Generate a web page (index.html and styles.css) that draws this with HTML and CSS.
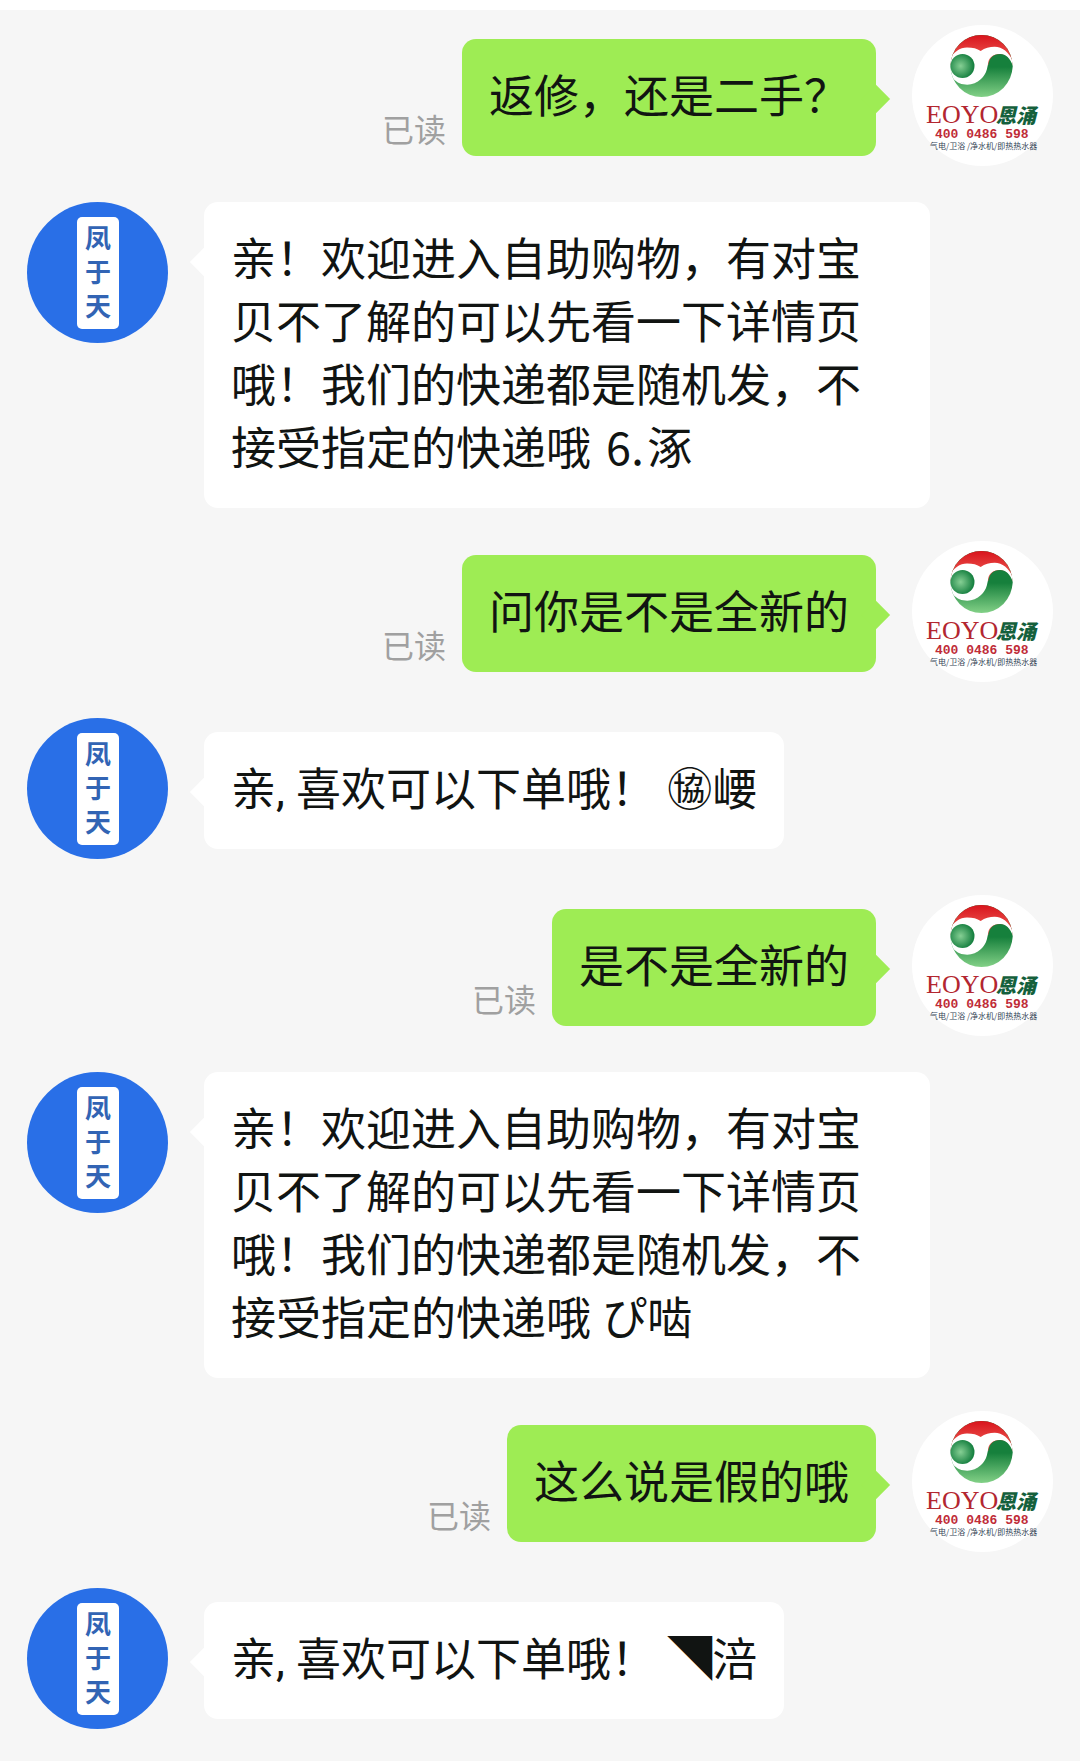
FILE: index.html
```
<!DOCTYPE html>
<html lang="zh-CN">
  <head>
    <meta charset="UTF-8" />
    <meta name="viewport" content="width=device-width, initial-scale=1.0" />
    <title>聊天</title>
    <link rel="stylesheet" href="styles.css">
  </head>
  <body>
    <!-- shared avatar artwork -->
    <svg class="defs" width="0" height="0" aria-hidden="true">
      <defs>
        <linearGradient id="red" x1="0" y1="10" x2="0" y2="36" gradientUnits="userSpaceOnUse">
          <stop offset="0" stop-color="#d8141c" />
          <stop offset="1" stop-color="#ee5c54" />
        </linearGradient>
        <linearGradient id="green" x1="0" y1="10" x2="0" y2="74" gradientUnits="userSpaceOnUse">
          <stop offset="0.5" stop-color="#16803c" />
          <stop offset="1" stop-color="#8ad68c" />
        </linearGradient>
        <radialGradient id="ball" cx="0.42" cy="0.5" r="0.55">
          <stop offset="0" stop-color="#86cf94" />
          <stop offset="1" stop-color="#168040" />
        </radialGradient>
        <clipPath id="globe"><circle cx="69.5" cy="41" r="31" /></clipPath>
      </defs>
      <symbol id="buyer" viewBox="0 0 141 141">
        <circle cx="70.5" cy="70.5" r="70.5" fill="#fff" />
        <g clip-path="url(#globe)">
          <rect x="38" y="10" width="64" height="64" fill="url(#green)" />
          <path d="M36 8h68v32H36z" fill="url(#red)" />
          <path d="M36 40c2-10 10-17.500 19-17.500 6 0 10 1 13.700 3.500 4-3 9-4.300 14-4.300 8 0 15 6 19 16.300l-2 4c-2-8-6-13-12-13-7 0-11 4-11.600 9-.8 7-2.600 12-7.100 16-5 4.700-11 6.500-17.700 5.300-6-1-11-5-15.300-13.300z" fill="#fff" />
          <path d="M76 41c1-8 5-12 12-12 6 0 10 4 13 12v6H75z" fill="url(#green)" />
        </g>
        <circle cx="50.500" cy="41" r="12" fill="url(#ball)" />
      </symbol>
      <symbol id="seller" viewBox="0 0 141 141">
        <circle cx="70.5" cy="70.5" r="70.5" fill="#296fe7" />
        <rect x="50" y="15" width="42" height="112" rx="5" fill="#fff" />
      </symbol>
    </svg>

    <main class="chat">
      <div class="row mine">
        <svg class="avatar" viewBox="0 0 141 141">
          <use href="#buyer" />
          <text class="logo-latin" x="14" y="98">EOYO</text>
          <text class="logo-cn" x="84" y="98">恩涌</text>
          <text class="logo-phone" x="23" y="113">400 0486 598</text>
          <text class="logo-tag" x="18" y="124">气电/卫浴 /净水机/即热热水器</text>
        </svg>
        <p class="bubble">返修，还是二手？</p>
        <span class="read">已读</span>
      </div>

      <div class="row">
        <svg class="avatar" viewBox="0 0 141 141">
          <use href="#seller" />
          <text class="logo-shop" x="71" y="46">凤</text>
          <text class="logo-shop" x="71" y="80">于</text>
          <text class="logo-shop" x="71" y="114">天</text>
        </svg>
        <p class="bubble long">亲！欢迎进入自助购物，有对宝贝不了解的可以先看一下详情页哦！我们的快递都是随机发，不接受指定的快递哦 ⒍涿</p>
      </div>

      <div class="row mine">
        <svg class="avatar" viewBox="0 0 141 141">
          <use href="#buyer" />
          <text class="logo-latin" x="14" y="98">EOYO</text>
          <text class="logo-cn" x="84" y="98">恩涌</text>
          <text class="logo-phone" x="23" y="113">400 0486 598</text>
          <text class="logo-tag" x="18" y="124">气电/卫浴 /净水机/即热热水器</text>
        </svg>
        <p class="bubble">问你是不是全新的</p>
        <span class="read">已读</span>
      </div>

      <div class="row">
        <svg class="avatar" viewBox="0 0 141 141">
          <use href="#seller" />
          <text class="logo-shop" x="71" y="46">凤</text>
          <text class="logo-shop" x="71" y="80">于</text>
          <text class="logo-shop" x="71" y="114">天</text>
        </svg>
        <p class="bubble">亲, 喜欢可以下单哦！ ㊯崾</p>
      </div>

      <div class="row mine">
        <svg class="avatar" viewBox="0 0 141 141">
          <use href="#buyer" />
          <text class="logo-latin" x="14" y="98">EOYO</text>
          <text class="logo-cn" x="84" y="98">恩涌</text>
          <text class="logo-phone" x="23" y="113">400 0486 598</text>
          <text class="logo-tag" x="18" y="124">气电/卫浴 /净水机/即热热水器</text>
        </svg>
        <p class="bubble">是不是全新的</p>
        <span class="read">已读</span>
      </div>

      <div class="row">
        <svg class="avatar" viewBox="0 0 141 141">
          <use href="#seller" />
          <text class="logo-shop" x="71" y="46">凤</text>
          <text class="logo-shop" x="71" y="80">于</text>
          <text class="logo-shop" x="71" y="114">天</text>
        </svg>
        <p class="bubble long">亲！欢迎进入自助购物，有对宝贝不了解的可以先看一下详情页哦！我们的快递都是随机发，不接受指定的快递哦 ぴ啮</p>
      </div>

      <div class="row mine">
        <svg class="avatar" viewBox="0 0 141 141">
          <use href="#buyer" />
          <text class="logo-latin" x="14" y="98">EOYO</text>
          <text class="logo-cn" x="84" y="98">恩涌</text>
          <text class="logo-phone" x="23" y="113">400 0486 598</text>
          <text class="logo-tag" x="18" y="124">气电/卫浴 /净水机/即热热水器</text>
        </svg>
        <p class="bubble">这么说是假的哦</p>
        <span class="read">已读</span>
      </div>

      <div class="row">
        <svg class="avatar" viewBox="0 0 141 141">
          <use href="#seller" />
          <text class="logo-shop" x="71" y="46">凤</text>
          <text class="logo-shop" x="71" y="80">于</text>
          <text class="logo-shop" x="71" y="114">天</text>
        </svg>
        <p class="bubble">亲, 喜欢可以下单哦！ ◥涪</p>
      </div>
    </main>
  </body>
</html>
```
FILE: styles.css
```
* {
  box-sizing: border-box;
}

body {
  margin: 0;
  background: #f6f6f6;
  border-top: 10px solid #fff;
  color: #111412;
  font-family: Roboto, "Noto Sans CJK SC", sans-serif;
}

.defs {
  position: absolute;
}

.chat {
  display: flex;
  flex-direction: column;
  gap: 33px;
  padding: 15px 27px 28px;
}

.row {
  display: flex;
  align-items: flex-start;
  min-height: 144px;
}

.row.mine {
  flex-direction: row-reverse;
}

.avatar {
  flex: none;
  width: 141px;
  height: 141px;
}

.bubble {
  position: relative;
  max-width: 726px;
  margin: 14px 36px 0;
  padding: 27px;
  border-radius: 14px;
  background: #fff;
  font-size: 45px;
  line-height: 63px;
}

.bubble.long {
  margin-top: 0;
}

.mine .bubble {
  background: #9eec54;
}

/* little arrow pointing at the avatar */
.bubble::before {
  content: "";
  position: absolute;
  top: 50px;
  left: -10px;
  width: 20px;
  height: 20px;
  background: inherit;
  transform: rotate(45deg);
}

.mine .bubble::before {
  left: auto;
  right: -10px;
}

.read {
  align-self: flex-end;
  margin: 0 -20px 22px 0;
  color: #a0a0a0;
  font-size: 32px;
  line-height: 32px;
}

/* avatar lettering */
.logo-latin {
  fill: #b32630;
  font-family: "Liberation Serif", serif;
  font-size: 26px;
}

.logo-cn {
  fill: #14603c;
  font-family: "Noto Sans CJK SC", sans-serif;
  font-size: 20px;
  font-style: italic;
  font-weight: 900;
}

.logo-phone {
  fill: #c02c38;
  font-family: "Liberation Mono", monospace;
  font-size: 13px;
  font-weight: 700;
}

.logo-tag {
  fill: #345;
  font-family: "Noto Sans CJK SC", sans-serif;
  font-size: 8px;
}

.logo-shop {
  fill: #3264b4;
  font-family: "Noto Sans CJK SC", sans-serif;
  font-size: 26px;
  font-weight: 700;
  text-anchor: middle;
}
```
